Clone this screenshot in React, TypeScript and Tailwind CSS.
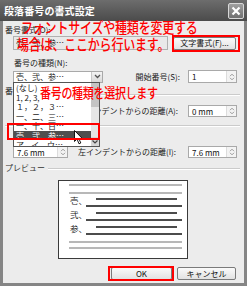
import React from "react";

const jp = "font-['Noto_Sans_CJK_JP','Noto_Sans_CJK_SC',sans-serif]";

function Spinner() {
  return (
    <span className="flex w-[10px] items-center justify-center border-l border-[#dcdcdc] bg-[#f3f3f3]">
      <svg width="6" height="8" viewBox="0 0 6 8">
        <path d="M1 3.2 L3 1.2 L5 3.2 M1 4.8 L3 6.8 L5 4.8" fill="none" stroke="#9a9a9a" strokeWidth="1" />
      </svg>
    </span>
  );
}

function Spin({ value, className }: { value: string; className: string }) {
  return (
    <div className={`flex items-stretch border border-[#a9a9a9] bg-white ${className}`}>
      <span className="flex-1 pl-[3px] text-[8px] leading-[11px] text-[#111]">{value}</span>
      <Spinner />
    </div>
  );
}

function Arrow() {
  return (
    <span className="flex w-[11px] items-center justify-center border-l border-[#c8c8c8] bg-linear-to-b from-[#f4f4f4] to-[#d9d9d9]">
      <svg width="7" height="5" viewBox="0 0 7 5">
        <path d="M1 1 L3.5 3.5 L6 1" fill="none" stroke="#555" strokeWidth="1.3" />
      </svg>
    </span>
  );
}

function Button({ label, className }: { label: string; className: string }) {
  return (
    <div
      className={`flex items-center justify-center rounded-[2px] border border-[#7a7a7a] bg-linear-to-b from-[#fafafa] to-[#e2e2e2] text-[8px] leading-none text-[#111] ${className}`}
    >
      {label}
    </div>
  );
}

const listItems = ["(なし)", "1, 2, 3,", "１，２，３…", "一、二、三…", "一、十、百…", "壱、弐、参…", "ア、イ、ウ…"];

export default function App() {
  return (
    <div className={`relative flex h-[286px] w-[247px] flex-col overflow-hidden bg-[#858585] ${jp}`}>
      {/* title bar */}
      <div className="flex h-[21px] items-center justify-between bg-linear-to-b from-[#6d6d6d] to-[#4b4b4b] pl-[4px] pr-[3px]">
        <span className="text-[10px] font-bold leading-none tracking-[0.1px] text-white">段落番号の書式設定</span>
        <span className="flex h-[16px] w-[16px] items-center justify-center rounded-[2px] border border-[#d8d8d8] bg-linear-to-b from-[#a0a0a0] to-[#707070]">
          <svg width="10" height="10" viewBox="0 0 10 10">
            <path d="M1.5 1.5 L8.5 8.5 M8.5 1.5 L1.5 8.5" stroke="#fff" strokeWidth="2.2" />
          </svg>
        </span>
      </div>

      {/* body */}
      <div className="mx-[3px] mb-[3px] flex flex-1 flex-col bg-[#ececec] pt-[4px] text-[8px] leading-[10px] text-[#222]">
        <div className="ml-[2px]">番号書式(O):</div>
        <div className="mt-[1px] flex h-[14px] items-center">
          <div className="ml-[10px] h-[14px] w-[155px] border border-[#b0b0b0] bg-[#e9e9e9] pl-[2px] leading-[12px]">壱、弐、参…</div>
          <Button label="文字書式(F)..." className="ml-[5px] h-[13px] w-[63px]" />
        </div>

        <div className="ml-[11px] mt-[8px]">番号の種類(N):</div>
        <div className="mt-[2px] flex h-[13px] items-center">
          <div className="ml-[10px] flex h-[12px] w-[90px] border border-[#a9a9a9] bg-white">
            <span className="flex-1 pl-[2px] leading-[10px]">壱、弐、参…</span>
            <Arrow />
          </div>
          <span className="flex-1 pr-[8px] text-right">開始番号(S):</span>
          <Spin value="1" className="mr-[7px] h-[13px] w-[49px]" />
        </div>

        <div className="flex h-[14px] items-start pt-[3px]">
          <span className="ml-[2px]">番号の配置(U):</span>
          <div className="ml-[4px] mr-[4px] mt-[8px] h-px flex-1 bg-[#cbcbcb] shadow-[0_1px_0_#fff]" />
        </div>

        <div className="mt-[8px] flex h-[12px] items-center">
          <span className="flex-1 pr-[10px] text-right">左インデントからの距離(A):</span>
          <Spin value="0 mm" className="mr-[7px] h-[12px] w-[49px]" />
        </div>

        <div className="ml-[2px] mr-[4px] mt-[8px] h-px bg-[#cbcbcb] shadow-[0_1px_0_#fff]" />

        <div className="mt-[20px] flex h-[12px] items-center">
          <Spin value="7.6 mm" className="ml-[10px] h-[12px] w-[55px]" />
          <span className="flex-1 pr-[12px] text-right">左インデントからの距離(I):</span>
          <Spin value="7.6 mm" className="mr-[7px] h-[12px] w-[49px]" />
        </div>

        <div className="mt-[5px] flex h-[10px] items-center">
          <span className="ml-[2px] text-[#333]">プレビュー</span>
          <div className="ml-[3px] mr-[4px] h-px flex-1 bg-[#cbcbcb] shadow-[0_1px_0_#fff]" />
        </div>

        <div className="ml-[55px] mt-[7px] h-[79px] w-[130px] border border-[#3a3a3a] bg-white">
          <svg width="128" height="77" viewBox="0 0 128 77">
            <line x1="10" y1="4" x2="123" y2="4" stroke="#b8b8b8" strokeWidth="2" />
            <line x1="10" y1="12" x2="123" y2="12" stroke="#b8b8b8" strokeWidth="2" />
            {["壱", "弐", "参"].map((c, i) => (
              <g key={c}>
                <text x="11" y={23 + i * 14} fontSize="8.5" fill="#222" fontFamily="Noto Sans CJK JP">
                  {c}、
                </text>
                <line x1="37" y1={18 + i * 14} x2="118" y2={18 + i * 14} stroke="#111" strokeWidth="1.6" />
                <line x1="27" y1={25 + i * 14} x2="123" y2={25 + i * 14} stroke="#111" strokeWidth="1.6" />
              </g>
            ))}
            <line x1="10" y1="61" x2="123" y2="61" stroke="#b8b8b8" strokeWidth="2" />
            <line x1="10" y1="67" x2="123" y2="67" stroke="#b8b8b8" strokeWidth="2" />
          </svg>
        </div>

        <div className="mr-[8px] mt-[8px] flex justify-end gap-[5px]">
          <Button label="OK" className="h-[13px] w-[61px]" />
          <Button label="キャンセル" className="h-[13px] w-[59px]" />
        </div>
      </div>

      {/* open list of number types */}
      <div className="absolute left-[13px] top-[82px] flex h-[65px] w-[87px] overflow-hidden border border-[#555] bg-white text-[8px] text-[#222]">
        <div className="flex flex-1 flex-col">
          {listItems.map((t) => (
            <div
              key={t}
              className={
                t === "壱、弐、参…"
                  ? "h-[9.5px] shrink-0 bg-[#4f4f4f] pl-[2px] leading-[9.5px] text-white"
                  : "h-[9.5px] shrink-0 pl-[2px] leading-[9.5px]"
              }
            >
              {t}
            </div>
          ))}
        </div>
        <div className="flex w-[8px] flex-col bg-[#e6e6e6]">
          <div className="h-[24px] bg-[#c4c4c4]" />
          <div className="flex-1" />
          <div className="flex h-[9px] items-center justify-center bg-[#d6d6d6]">
            <svg width="6" height="4" viewBox="0 0 6 4">
              <path d="M0.5 0.5 L3 3 L5.5 0.5" fill="none" stroke="#444" strokeWidth="1.2" />
            </svg>
          </div>
        </div>
      </div>

      {/* mouse pointer */}
      <svg className="absolute left-[74px] top-[130px]" width="10" height="15" viewBox="0 0 10 15">
        <path d="M0.5 0.5 L0.5 11.5 L3 9 L5 13.8 L6.8 13 L4.8 8.5 L8.3 8.5 Z" fill="#fff" stroke="#000" strokeWidth="0.9" />
      </svg>

      {/* red annotations */}
      <div className="absolute left-[172px] top-[35px] h-[17px] w-[68px] border-2 border-[#ff0000]" />
      <div className="absolute left-[7px] top-[123px] h-[17px] w-[93px] border-2 border-[#ff0000]" />
      <div className="absolute left-[108px] top-[266px] h-[15px] w-[66px] border-2 border-[#ff0000]" />

      <div className="absolute left-[21px] top-[19px] origin-top-left scale-y-125 whitespace-nowrap text-[12px] font-medium leading-[12px] tracking-[-0.2px] text-[#ff0000]">
        フォントサイズや種類を変更する
      </div>
      <div className="absolute left-[17px] top-[36px] origin-top-left scale-y-125 whitespace-nowrap text-[12px] font-medium leading-[12px] tracking-[-0.2px] text-[#ff0000]">
        場合は、ここから行います。
      </div>
      <div className="absolute left-[40px] top-[85px] origin-top-left scale-y-125 whitespace-nowrap text-[11px] font-medium leading-[11px] tracking-[-0.3px] text-[#ff0000]">
        番号の種類を選択します
      </div>
    </div>
  );
}
